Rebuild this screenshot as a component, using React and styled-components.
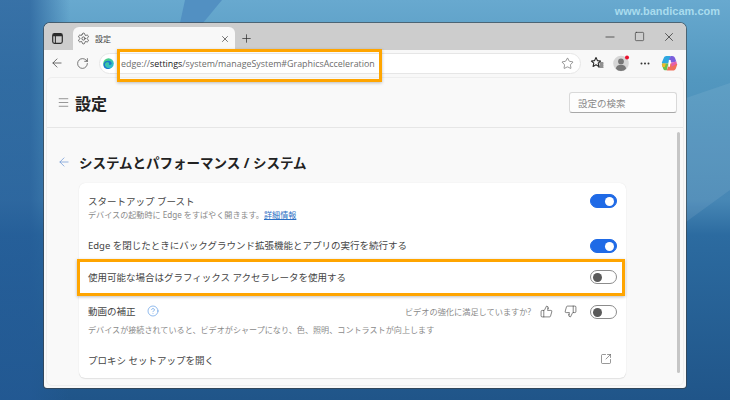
import styled, { createGlobalStyle } from 'styled-components';
import {
    ArrowLeft,
    CircleHelp,
    Menu,
    Minus,
    Plus,
    RotateCw,
    Settings,
    Square,
    SquareArrowOutUpRight,
    Star,
    ThumbsDown,
    ThumbsUp,
    X,
} from 'lucide-react';

const GlobalStyle = createGlobalStyle`
    html, body {
        margin: 0;
        padding: 0;
    }
    body {
        font-family: 'Noto Sans', 'Noto Sans CJK JP', sans-serif;
    }
    * {
        box-sizing: border-box;
    }
`;

const Desktop = styled.div`
    position: relative;
    width: 730px;
    height: 400px;
    overflow: hidden;
    padding: 23px 44px 12px;
    background:
        linear-gradient(90deg, rgba(35, 90, 150, 0.7) 0, rgba(35, 90, 150, 0.7) 30px, rgba(35, 90, 150, 0) 70px),
        linear-gradient(180deg, #68a9cf 0, #5297bf 80px, #4787b5 200px, #2c6ba0 235px, #205589 400px);

    /* light band of the wallpaper, right of the window */
    &::before {
        content: '';
        position: absolute;
        inset: 0;
        background: rgba(255, 255, 255, 0.08);
        clip-path: polygon(686px 98px, 730px 83px, 730px 190px, 686px 222px);
    }

    /* darker wedge above the window */
    &::after {
        content: '';
        position: absolute;
        inset: 0;
        background: #5290c2;
        clip-path: polygon(185px 0, 222px 0, 203px 23px, 180px 23px);
    }
`;

const Watermark = styled.div`
    position: absolute;
    top: 5px;
    right: 10px;
    z-index: 1;
    font-family: 'Liberation Sans', sans-serif;
    font-size: 11px;
    font-weight: 700;
    color: #a9dcee;
`;

const Window = styled.div`
    position: relative;
    z-index: 1;
    display: flex;
    flex-direction: column;
    width: 642px;
    height: 365px;
    background: #f8f8f8;
    border-radius: 6px 6px 3px 3px;
    box-shadow: 0 0 0 1px rgba(60, 60, 60, 0.6);
    overflow: hidden;
`;

const TitleBar = styled.div`
    display: flex;
    align-items: flex-end;
    flex: none;
    height: 27px;
    padding-left: 6px;
    background: #cdcdcd;
`;

const TitleIcon = styled.div`
    display: flex;
    align-items: center;
    justify-content: center;
    width: ${(p) => p.$w || 14}px;
    height: 23px;
    color: #2b2b2b;
`;

const Tab = styled.div`
    display: flex;
    align-items: center;
    width: 162px;
    height: 23px;
    margin-left: 9px;
    padding: 0 5px 0 4px;
    gap: 5px;
    background: #f8f8f8;
    border-radius: 6px 6px 0 0;
    color: #333;
`;

const TabTitle = styled.span`
    flex: 1;
    font-size: 8px;
    color: #444;
`;

const NewTab = styled(TitleIcon)`
    margin-left: 4px;
`;

const WindowControls = styled.div`
    display: flex;
    align-items: center;
    gap: 17px;
    height: 27px;
    margin-left: auto;
    padding-right: 10px;
    color: #333;
`;

const ToolBar = styled.div`
    display: flex;
    align-items: center;
    flex: none;
    height: 27px;
    padding: 0 6px 1px 6px;
`;

const NavButton = styled.div`
    display: flex;
    align-items: center;
    justify-content: center;
    width: ${(p) => p.$w || 14}px;
    margin-left: ${(p) => p.$ml || 0}px;
    color: #444;
`;

const Address = styled.div`
    position: relative;
    display: flex;
    align-items: center;
    width: 482px;
    height: 21px;
    margin-left: 10px;
    padding: 0 6px 0 3px;
    background: #fff;
    border: 1px solid #e6e6e6;
    border-radius: 11px;
`;

const Url = styled.span`
    flex: 1;
    margin-left: 7px;
    font-family: 'Open Sans', sans-serif;
    font-size: 8.9px;
    color: #6c6c6c;
    white-space: nowrap;
`;

const UrlStrong = styled.span`
    color: #222;
`;

const OrangeBox = styled.div`
    position: absolute;
    top: ${(p) => p.$top}px;
    left: ${(p) => p.$left}px;
    width: ${(p) => p.$w}px;
    height: ${(p) => p.$h}px;
    border: 3px solid #ffa500;
    box-shadow: 0 1px 3px rgba(0, 0, 0, 0.25);
    pointer-events: none;
`;

const Panel = styled.div`
    display: flex;
    flex-direction: column;
    flex: 1;
    min-height: 0;
    margin: 0 2px 2px;
    background: #f9f9f9;
    border: 1px solid #eeeeee;
    border-radius: 6px;
`;

const PanelHeader = styled.div`
    display: flex;
    align-items: center;
    flex: none;
    height: 50px;
    padding: 0 6px 0 10px;
    border-bottom: 1px solid #e6e6e6;
    color: #555;
`;

const PanelTitle = styled.h1`
    flex: 1;
    margin: 0 0 0 5px;
    font-size: 16px;
    font-weight: 700;
    color: #222;
`;

const SearchBox = styled.div`
    display: flex;
    align-items: center;
    width: 108px;
    height: 21px;
    padding-left: 8px;
    font-size: 9.5px;
    color: #8a8a8a;
    background: #fdfdfd;
    border: 1px solid #d9d9d9;
    border-bottom-color: #a8a8a8;
    border-radius: 3px;
`;

const PanelBody = styled.div`
    display: flex;
    flex: 1;
    min-height: 0;
    padding: 4px 3px 13px 10px;
`;

const Main = styled.div`
    flex: 1;
`;

const PageHead = styled.div`
    display: flex;
    align-items: center;
    height: 20px;
    margin-top: 20px;
    color: #5b8ad0;
`;

const PageTitle = styled.h2`
    margin: 0 0 0 8px;
    font-size: 13.5px;
    font-weight: 700;
    color: #222;
`;

const Card = styled.div`
    display: flex;
    flex-direction: column;
    width: 547px;
    height: 195px;
    margin: 11px 0 0 22px;
    padding: 11px 9px;
    background: #fff;
    border-radius: 6px;
    box-shadow: 0 0 1px rgba(0, 0, 0, 0.12), 0 1px 1px rgba(0, 0, 0, 0.08);
`;

const Row = styled.div`
    position: relative;
    display: flex;
    align-items: flex-start;
    margin-top: ${(p) => p.$mt || 0}px;
`;

const RowText = styled.div`
    flex: 1;
    min-width: 0;
`;

const RowTitle = styled.div`
    display: flex;
    align-items: center;
    height: 14px;
    font-size: 9.5px;
    color: #444;
    white-space: nowrap;
`;

const RowSub = styled.div`
    height: 14px;
    margin-top: ${(p) => p.$mt || 0}px;
    font-size: 8.1px;
    line-height: 14px;
    color: #8a8a8a;
    white-space: nowrap;
`;

const Link = styled.a`
    color: #2b6fc4;
    text-decoration: underline;
`;

const Help = styled.span`
    display: inline-flex;
    margin-left: 11px;
    color: #4a8fe0;
`;

const Feedback = styled.div`
    display: flex;
    align-items: center;
    height: 14px;
    margin-right: 13px;
    font-size: 8.2px;
    color: #8a8a8a;
    white-space: nowrap;
`;

const Thumb = styled.span`
    display: inline-flex;
    margin-left: ${(p) => p.$ml}px;
    color: #333;
`;

const Toggle = styled.div`
    display: flex;
    align-items: center;
    justify-content: ${(p) => (p.$on ? 'flex-end' : 'flex-start')};
    flex: none;
    width: 27px;
    height: 14px;
    padding: 0 2px;
    margin-top: ${(p) => p.$mt || 0}px;
    background: ${(p) => (p.$on ? '#1f6ae6' : '#fff')};
    border: 1px solid ${(p) => (p.$on ? '#1f6ae6' : '#8c8c8c')};
    border-radius: 7px;
`;

const Knob = styled.span`
    width: 9px;
    height: 9px;
    background: ${(p) => (p.$on ? '#fff' : '#5a5a5a')};
    border-radius: 50%;
`;

const RowIcon = styled.span`
    display: inline-flex;
    margin-right: 5px;
    color: #444;
`;

const Scrollbar = styled.div`
    flex: none;
    width: 3px;
    height: 241px;
    background: #c6c6c6;
    border-radius: 2px;
`;

const SidebarIcon = () => (
    <svg width="11" height="11" viewBox="0 0 11 11" fill="none">
        <rect x="0.7" y="0.7" width="9.6" height="9.6" rx="1.8" stroke="#2b2b2b" strokeWidth="1.2" />
        <path d="M1 1h9v2.2H1z" fill="#2b2b2b" />
        <path d="M3.4 3v7" stroke="#2b2b2b" strokeWidth="1" />
    </svg>
);

const EdgeLogo = () => (
    <svg width="11" height="11" viewBox="0 0 24 24">
        <defs>
            <linearGradient id="edgeA" x1="0" y1="0" x2="1" y2="1">
                <stop offset="0" stopColor="#4fd66a" />
                <stop offset="1" stopColor="#28b4ea" />
            </linearGradient>
        </defs>
        <circle cx="12" cy="12" r="11.5" fill="url(#edgeA)" />
        <path d="M1 14c1-6 6-8 10-8 5 0 8 3 8 6 0 2-2 3-4 3-1 0-2-.4-2-1 2-4-3-6-6-4-3 2-4 6-1 9 2 2 6 4 11 2-3 3-9 4-13 1-2-2-3-5-3-8z" fill="#1a78cf" />
    </svg>
);

const FavoritesIcon = () => (
    <svg width="14" height="14" viewBox="0 0 14 14" fill="none" stroke="#2b2b2b" strokeWidth="1.1" strokeLinejoin="round">
        <path d="M6 1.6l1.4 3 3.2.4-2.4 2.2.7 3.2L6 8.8l-2.9 1.6.7-3.2L1.4 5l3.2-.4z" />
        <path d="M10 7h3M10 9h3M8.6 11h4.4" strokeLinecap="round" />
    </svg>
);

const ProfileIcon = () => (
    <svg width="17" height="17" viewBox="0 0 17 17">
        <circle cx="8" cy="8.5" r="7.8" fill="#d6d6d6" />
        <circle cx="8" cy="6.4" r="2.9" fill="#777" />
        <path d="M2.8 13.5c.6-2.8 2.8-3.8 5.2-3.8s4.6 1 5.2 3.8C12 15.2 10 16 8 16s-4-.8-5.2-2.5z" fill="#777" />
        <circle cx="14" cy="2.6" r="2" fill="#e8112d" />
    </svg>
);

const DotsIcon = () => (
    <svg width="10" height="3" viewBox="0 0 10 3" fill="#333">
        <circle cx="1.5" cy="1.5" r="1" />
        <circle cx="5" cy="1.5" r="1" />
        <circle cx="8.5" cy="1.5" r="1" />
    </svg>
);

const CopilotLogo = () => (
    <svg width="17" height="17" viewBox="0 0 16 16">
        <path d="M5.2 1h4L7 8H1.6c-.7 0-.9-.6-.7-1.2l1.6-3.7C3 1.8 3.9 1 5.2 1z" fill="#2fa7e0" />
        <path d="M9.2 1h1.3c1.3 0 2.2.7 2.7 1.9l1.2 3.3-4.4 1.2L7.6 4z" fill="#7a5fdc" />
        <path d="M1.2 8H7l-1.6 6.4H4.2c-1 0-1.7-.5-2.1-1.5L.9 9.4c-.2-.8 0-1.4.3-1.4z" fill="#6cc04a" />
        <path d="M7 8h7.6c.6 0 .8.6.6 1.2l-1.2 3.4c-.5 1.2-1.4 1.9-2.7 1.9H5.4L7 9.8z" fill="#f0705a" />
        <path d="M9.6 7.2l4.8-1 .6 1.8-5 3z" fill="#e35fb0" />
        <path d="M1.2 8h3.4l-1 3.6-2.4-.6z" fill="#f4b62a" />
        <path d="M7.4 4.8h1.8L8.4 11H6.8z" fill="#fff" />
    </svg>
);

export default function App() {
    return (
        <Desktop>
            <GlobalStyle />
            <Watermark>www.bandicam.com</Watermark>
            <Window>
                <TitleBar>
                    <TitleIcon>
                        <SidebarIcon />
                    </TitleIcon>
                    <Tab>
                        <Settings size={13} strokeWidth={1.3} />
                        <TabTitle>設定</TabTitle>
                        <X size={10} strokeWidth={1.6} />
                    </Tab>
                    <NewTab>
                        <Plus size={13} strokeWidth={1.3} />
                    </NewTab>
                    <WindowControls>
                        <Minus size={14} strokeWidth={1.3} />
                        <Square size={11} strokeWidth={1.4} />
                        <X size={14} strokeWidth={1.3} />
                    </WindowControls>
                </TitleBar>
                <ToolBar>
                    <NavButton>
                        <ArrowLeft size={14} strokeWidth={1.3} />
                    </NavButton>
                    <NavButton $ml={11}>
                        <RotateCw size={13} strokeWidth={1.3} />
                    </NavButton>
                    <Address>
                        <EdgeLogo />
                        <Url>
                            edge://<UrlStrong>settings</UrlStrong>/system/manageSystem#GraphicsAcceleration
                        </Url>
                        <Star size={13} strokeWidth={1.1} color="#555" />
                        <OrangeBox $top={-5} $left={17} $w={265} $h={33} />
                    </Address>
                    <NavButton $ml={9} $w={14}>
                        <FavoritesIcon />
                    </NavButton>
                    <NavButton $ml={9} $w={17}>
                        <ProfileIcon />
                    </NavButton>
                    <NavButton $ml={8} $w={14}>
                        <DotsIcon />
                    </NavButton>
                    <NavButton $ml={9} $w={17}>
                        <CopilotLogo />
                    </NavButton>
                </ToolBar>
                <Panel>
                    <PanelHeader>
                        <Menu size={13} strokeWidth={1.1} />
                        <PanelTitle>設定</PanelTitle>
                        <SearchBox>設定の検索</SearchBox>
                    </PanelHeader>
                    <PanelBody>
                        <Main>
                            <PageHead>
                                <ArrowLeft size={14} strokeWidth={1.1} />
                                <PageTitle>システムとパフォーマンス / システム</PageTitle>
                            </PageHead>
                            <Card>
                                <Row>
                                    <RowText>
                                        <RowTitle>スタートアップ ブースト</RowTitle>
                                        <RowSub>
                                            デバイスの起動時に Edge をすばやく開きます。<Link>詳細情報</Link>
                                        </RowSub>
                                    </RowText>
                                    <Toggle $on>
                                        <Knob $on />
                                    </Toggle>
                                </Row>
                                <Row $mt={16}>
                                    <RowText>
                                        <RowTitle>Edge を閉じたときにバックグラウンド拡張機能とアプリの実行を続行する</RowTitle>
                                    </RowText>
                                    <Toggle $on $mt={1}>
                                        <Knob $on />
                                    </Toggle>
                                </Row>
                                <Row $mt={17}>
                                    <OrangeBox $top={-11} $left={-11} $w={548} $h={37} />
                                    <RowText>
                                        <RowTitle>使用可能な場合はグラフィックス アクセラレータを使用する</RowTitle>
                                    </RowText>
                                    <Toggle>
                                        <Knob />
                                    </Toggle>
                                </Row>
                                <Row $mt={20}>
                                    <RowText>
                                        <RowTitle>
                                            動画の補正
                                            <Help>
                                                <CircleHelp size={12} strokeWidth={1.2} />
                                            </Help>
                                        </RowTitle>
                                        <RowSub $mt={5}>
                                            デバイスが接続されていると、ビデオがシャープになり、色、照明、コントラストが向上します
                                        </RowSub>
                                    </RowText>
                                    <Feedback>
                                        ビデオの強化に満足していますか?
                                        <Thumb $ml={9}>
                                            <ThumbsUp size={13} strokeWidth={1.1} />
                                        </Thumb>
                                        <Thumb $ml={11}>
                                            <ThumbsDown size={13} strokeWidth={1.1} />
                                        </Thumb>
                                    </Feedback>
                                    <Toggle $mt={1}>
                                        <Knob />
                                    </Toggle>
                                </Row>
                                <Row $mt={16}>
                                    <RowText>
                                        <RowTitle>プロキシ セットアップを開く</RowTitle>
                                    </RowText>
                                    <RowIcon>
                                        <SquareArrowOutUpRight size={12} strokeWidth={1.1} />
                                    </RowIcon>
                                </Row>
                            </Card>
                        </Main>
                        <Scrollbar />
                    </PanelBody>
                </Panel>
            </Window>
        </Desktop>
    );
}
